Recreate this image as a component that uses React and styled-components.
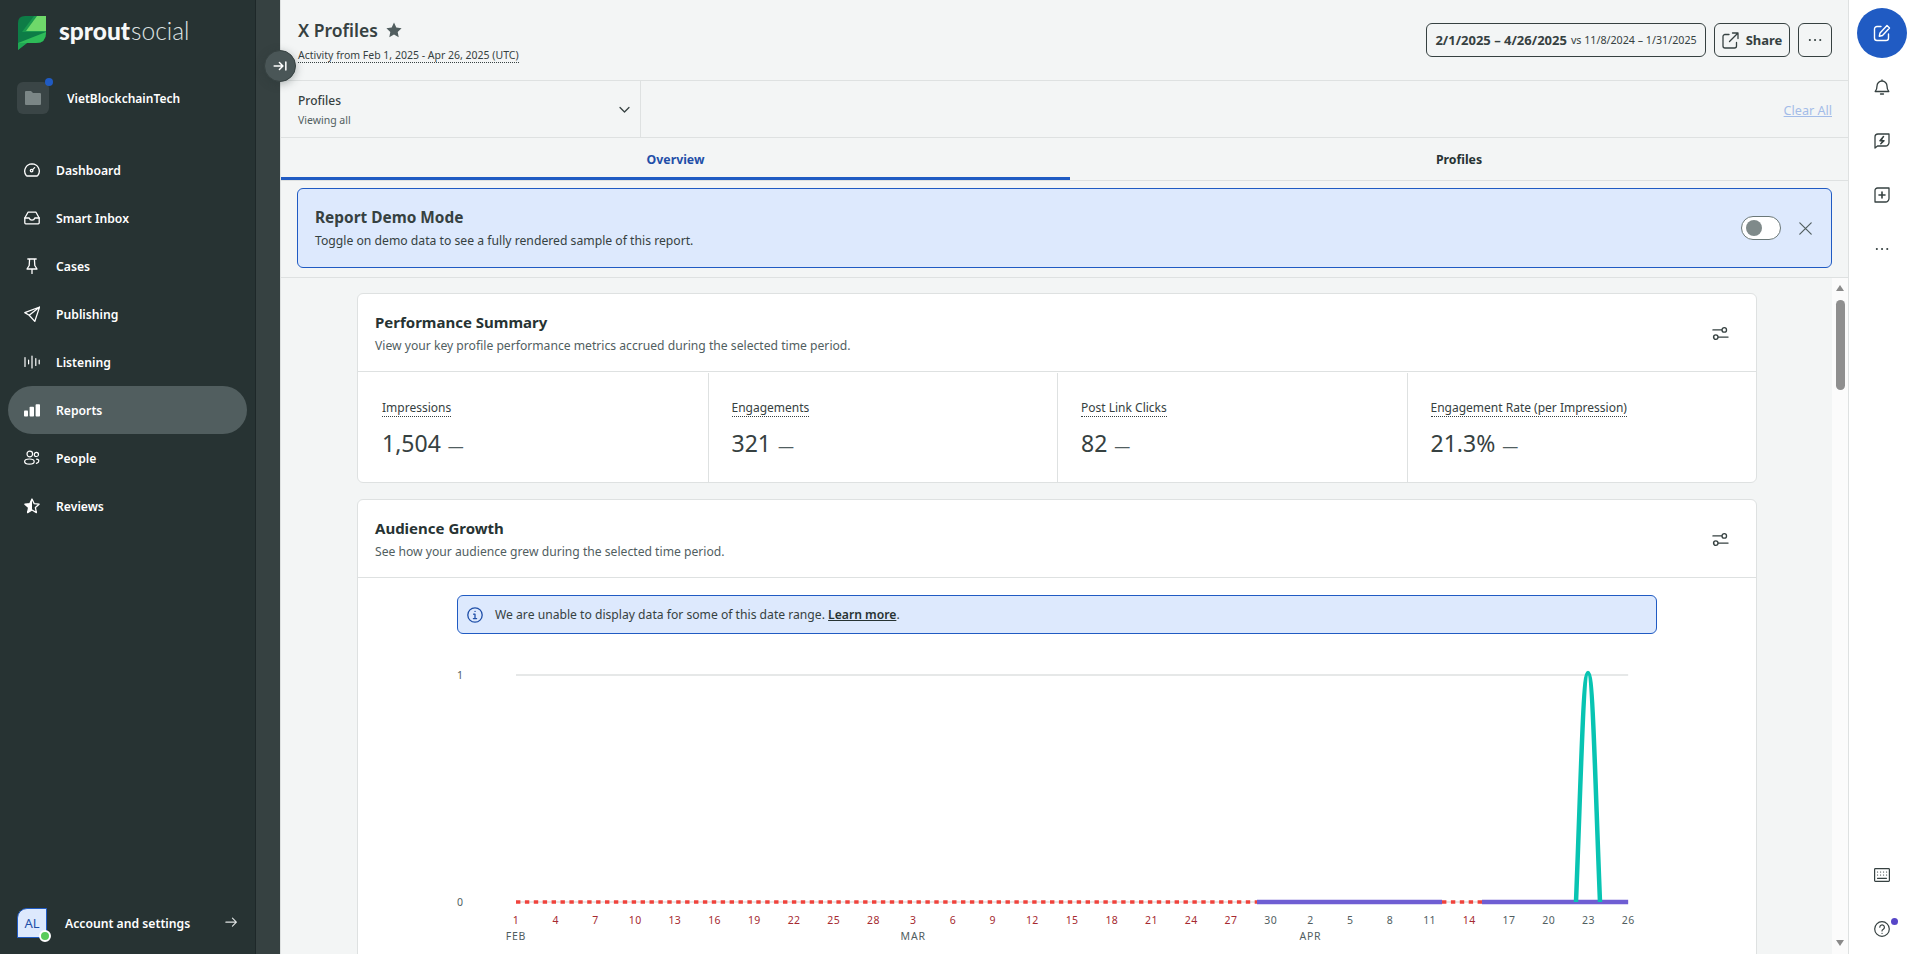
import styled, { createGlobalStyle } from "styled-components"

const GlobalStyle = createGlobalStyle`
    html, body, #root {
        margin: 0;
        height: 100%;
    }
    body {
        font-family: "Noto Sans", "Open Sans", sans-serif;
        color: #364141;
        overflow: hidden;
    }
    * {
        box-sizing: border-box;
    }
`;

const Page = styled.div`
    display: flex;
    height: 954px;
    overflow: hidden;
    position: relative;
`;

/* left navigation */
const Sidebar = styled.aside`
    width: 256px;
    flex-shrink: 0;
    display: flex;
    flex-direction: column;
    background-color: #273333;
    border-right: 1px solid #1e2829;
    color: #fff;
`;
const LogoRow = styled.div`
    display: flex;
    align-items: center;
    gap: 13px;
    height: 66px;
    padding: 0 0 0 18px;
`;
const LogoText = styled.div`
    font-family: "Lato", sans-serif;
    font-size: 24.5px;
    line-height: 1;
    margin-top: -3px;
    font-weight: 900;
    color: #f6f8f8;
    span {
        font-weight: 300;
        color: #dfe3e3;
        margin-left: 1px;
    }
`;
const OrgRow = styled.div`
    display: flex;
    align-items: center;
    gap: 18px;
    height: 32px;
    margin: 16px 0 32px 17px;
    font-size: 12px;
    font-weight: 600;
`;
const OrgIcon = styled.div`
    width: 32px;
    height: 32px;
    border-radius: 6px;
    background-color: #3a4546;
    display: flex;
    align-items: center;
    justify-content: center;
    position: relative;
`;
const OrgDot = styled.span`
    position: absolute;
    top: -4px;
    right: -4px;
    width: 8px;
    height: 8px;
    border-radius: 50%;
    background-color: #205bc3;
`;
const Nav = styled.nav`
    display: flex;
    flex-direction: column;
    padding: 0 8px;
`;
const NavItem = styled.div`
    height: 48px;
    display: flex;
    align-items: center;
    gap: 16px;
    padding-left: 16px;
    font-size: 12.2px;
    font-weight: 600;
    border-radius: 24px;
    background-color: ${({ $active }) => ($active ? "#515e5f" : "transparent")};
`;
const Account = styled.div`
    margin-top: auto;
    height: 46px;
    margin-bottom: 8px;
    display: flex;
    align-items: center;
    padding: 0 17px;
    font-size: 12.2px;
    font-weight: 600;
`;
const Avatar = styled.div`
    width: 30px;
    height: 30px;
    margin-right: 18px;
    border: 1px solid #205bc3;
    border-radius: 10px 0 0 0;
    background-color: #dde9fd;
    color: #1f4fa8;
    font-size: 13px;
    font-weight: 400;
    display: flex;
    align-items: center;
    justify-content: center;
    position: relative;
`;
const AvatarStatus = styled.span`
    position: absolute;
    right: -5px;
    bottom: -5px;
    width: 12px;
    height: 12px;
    border-radius: 50%;
    background-color: #59cb59;
    border: 2px solid #fff;
`;
const AccountArrow = styled.span`
    margin-left: auto;
    margin-right: -1px;
    display: flex;
`;
const Strip = styled.div`
    width: 24px;
    flex-shrink: 0;
    background-color: #364141;
`;
const CollapseButton = styled.div`
    position: absolute;
    left: 264px;
    top: 50px;
    width: 32px;
    height: 32px;
    border-radius: 50%;
    background-color: #4a5657;
    border: 1px solid #364141;
    box-shadow: 0 2px 8px rgba(39, 51, 51, 0.35);
    display: flex;
    align-items: center;
    justify-content: center;
    z-index: 3;
`;

/* main column */
const Main = styled.main`
    flex: 1;
    min-width: 0;
    display: flex;
    flex-direction: column;
    background-color: #f3f5f5;
    border-left: 1px solid #dee1e1;
`;
const Header = styled.header`
    height: 81px;
    flex-shrink: 0;
    display: flex;
    align-items: flex-start;
    justify-content: space-between;
    padding: 0 16px 0 17px;
    border-bottom: 1px solid #dee1e1;
`;
const TitleBlock = styled.div`
    padding-top: 17px;
`;
const TitleRow = styled.div`
    display: flex;
    align-items: center;
    gap: 8px;
    height: 25px;
`;
const Title = styled.h1`
    margin: 0;
    font-size: 17.5px;
    font-weight: 600;
    color: #364141;
`;
const Subtitle = styled.span`
    display: inline-block;
    margin-top: 5px;
    font-size: 10.5px;
    line-height: 14px;
    border-bottom: 1px dotted #364141;
`;
const HeaderActions = styled.div`
    display: flex;
    gap: 8px;
    padding-top: 23px;
`;
const OutlineButton = styled.div`
    height: 34px;
    width: ${({ $width }) => $width}px;
    display: flex;
    align-items: center;
    justify-content: center;
    gap: 7px;
    border: 1px solid #364141;
    border-radius: 6px;
    font-size: 13px;
    font-weight: 700;
    white-space: nowrap;
`;
const DateCompare = styled.span`
    font-size: 10.7px;
    font-weight: 400;
    margin-left: -3px;
`;
const FilterBar = styled.div`
    height: 57px;
    flex-shrink: 0;
    display: flex;
    border-bottom: 1px solid #dee1e1;
`;
const FilterSelect = styled.div`
    width: 360px;
    display: flex;
    align-items: center;
    justify-content: space-between;
    padding: 0 9px 0 17px;
    border-right: 1px solid #dee1e1;
`;
const FilterName = styled.div`
    font-size: 12px;
    line-height: 16px;
    font-weight: 500;
    padding-top: 2px;
`;
const FilterValue = styled.div`
    margin-top: 4px;
    font-size: 10.5px;
    line-height: 15px;
    color: #515e5f;
`;
const ClearAll = styled.a`
    margin: auto 16px auto auto;
    padding-top: 2px;
    font-size: 12.6px;
    color: #a3bce8;
    text-decoration: underline;
`;
const Tabs = styled.div`
    height: 43px;
    flex-shrink: 0;
    display: grid;
    grid-template-columns: 789px 1fr;
    border-bottom: 1px solid #dee1e1;
`;
const Tab = styled.div`
    display: flex;
    align-items: center;
    justify-content: center;
    padding-top: 3px;
    font-size: 12.3px;
    font-weight: 700;
    color: ${({ $active }) => ($active ? "#1f4fa8" : "#273333")};
    border-bottom: 3px solid ${({ $active }) => ($active ? "#205bc3" : "transparent")};
`;
const BannerWrap = styled.div`
    flex-shrink: 0;
    padding: 7px 16px 9px;
    border-bottom: 1px solid #dee1e1;
`;
const Banner = styled.div`
    height: 80px;
    display: flex;
    align-items: center;
    padding: 0 16px 0 17px;
    background-color: #dde9fd;
    border: 1px solid #205bc3;
    border-radius: 6px;
`;
const BannerTitle = styled.div`
    margin-top: 2.4px;
    font-size: 15.4px;
    line-height: 20px;
    font-weight: 700;
`;
const BannerText = styled.div`
    margin-top: 3.6px;
    font-size: 12.2px;
    line-height: 18px;
`;
const Toggle = styled.div`
    margin-left: auto;
    width: 40px;
    height: 24px;
    padding: 3px 4px;
    border: 1px solid #6b7878;
    border-radius: 12px;
    background-color: #fff;
`;
const ToggleKnob = styled.div`
    width: 16px;
    height: 16px;
    border-radius: 50%;
    background-color: #7f8a8a;
`;
const BannerClose = styled.div`
    display: flex;
    margin: 0 3px 0 18px;
`;

/* scrolling part */
const ScrollRow = styled.div`
    flex: 1;
    min-height: 0;
    display: flex;
`;
const ScrollContent = styled.div`
    flex: 1;
    min-width: 0;
    padding: 15px 75px 0 76px;
    overflow: hidden;
    display: flex;
    flex-direction: column;
    gap: 16px;
`;
const ScrollTrack = styled.div`
    width: 16px;
    flex-shrink: 0;
    background-color: #fbfbfb;
    display: flex;
    flex-direction: column;
    align-items: center;
    padding: 7px 0 8px;
`;
const ScrollArrow = styled.div`
    width: 0;
    height: 0;
    border-left: 4px solid transparent;
    border-right: 4px solid transparent;
    ${({ $down }) => ($down ? "border-top" : "border-bottom")}: 6px solid #8a8a8a;
`;
const ScrollThumb = styled.div`
    width: 9px;
    height: 90px;
    margin-top: 9px;
    margin-bottom: auto;
    border-radius: 5px;
    background-color: #8f8f8f;
`;
const Card = styled.section`
    flex-shrink: 0;
    background-color: #fff;
    border: 1px solid #dee1e1;
    border-radius: 6px;
`;
const CardHeader = styled.div`
    height: 78px;
    display: flex;
    align-items: center;
    justify-content: space-between;
    padding: 2px 27px 0 17px;
    border-bottom: 1px solid #dee1e1;
`;
const CardTitle = styled.h2`
    margin: 0;
    font-size: 15px;
    line-height: 20px;
    font-weight: 700;
    color: #273333;
`;
const CardSub = styled.p`
    margin: 5.5px 0 0;
    font-size: 12.15px;
    line-height: 18px;
    color: #515e5f;
`;
const Metrics = styled.div`
    display: grid;
    grid-template-columns: repeat(4, 1fr);
    height: 110px;
`;
const Metric = styled.div`
    padding: 22px 0 0 ${({ $first }) => ($first ? 24 : 23)}px;
    border-left: ${({ $first }) => ($first ? "none" : "1px solid #dee1e1")};
    margin-top: 1px;
`;
const MetricLabel = styled.span`
    font-size: 12px;
    line-height: 17px;
    display: inline-block;
    border-bottom: 1px dotted #364141;
`;
const MetricValue = styled.div`
    margin-top: 11px;
    font-size: 23px;
    line-height: 30px;
    display: flex;
    align-items: baseline;
    gap: 7px;
`;
const MetricDash = styled.span`
    font-size: 16px;
    color: #515e5f;
`;
const Notice = styled.div`
    width: 1200px;
    height: 39px;
    margin: 17px 0 0 99px;
    display: flex;
    align-items: center;
    gap: 12px;
    padding-left: 9px;
    background-color: #dde9fd;
    border: 1px solid #205bc3;
    border-radius: 6px;
    font-size: 12.15px;
`;
const NoticeLink = styled.a`
    font-weight: 600;
    text-decoration: underline;
    color: #273333;
`;
const ChartSvg = styled.svg`
    display: block;
    margin-top: 14px;
`;

/* right rail */
const Rail = styled.aside`
    width: 64px;
    flex-shrink: 0;
    display: flex;
    flex-direction: column;
    align-items: center;
    background-color: #fff;
    border-left: 1px solid #dee1e1;
    padding: 8px 0 0 2px;
    color: #364141;
`;
const ComposeButton = styled.div`
    width: 50px;
    height: 50px;
    border-radius: 50%;
    background-color: #205bc3;
    display: flex;
    align-items: center;
    justify-content: center;
    margin-bottom: 2px;
`;
const RailIcon = styled.div`
    width: 32px;
    height: 54px;
    display: flex;
    align-items: center;
    justify-content: center;
    position: relative;
`;
const RailBottom = styled.div`
    margin-top: auto;
    margin-bottom: -2px;
    display: flex;
    flex-direction: column;
`;
const HelpDot = styled.span`
    position: absolute;
    top: 16px;
    right: 0;
    width: 7px;
    height: 7px;
    border-radius: 50%;
    background-color: #5746c8;
`;

const Svg = ({ size = 16, w, h, box = "0 0 16 16", color = "currentColor", sw = 1.3, children }) => (
    <svg width={w || size} height={h || size} viewBox={box} fill="none" stroke={color} strokeWidth={sw} strokeLinecap="round" strokeLinejoin="round">
        {children}
    </svg>
);

const Logo = () => (
    <svg width="28" height="34" viewBox="0 0 28 34">
        <path d="M7 0H28V17Q28 27 18 27H9L0 34V7Q0 0 7 0Z" fill="#0d7c46" />
        <path d="M16 0H28V16H4Z" fill="#19994e" />
        <path d="M28 16V17Q28 27 18 27H9L0 27Z" fill="#2ebb58" />
        <path d="M0 27H9L0 34Z" fill="#1fa653" />
        <path d="M19 0H28V15H8Z" fill="#6fd86a" />
    </svg>
);

const icons = {
    dashboard: (
        <Svg>
            <path d="M8 1.8a7.3 7.3 0 0 1 5.7 11.8 1 1 0 0 1-.8.4H3.1a1 1 0 0 1-.8-.4A7.3 7.3 0 0 1 8 1.8Z" />
            <circle cx="7.6" cy="8.6" r="1.3" />
            <path d="M8.6 7.6L10.6 5.6" />
        </Svg>
    ),
    inbox: (
        <Svg>
            <path d="M.8 8L4 2.2h8L15.2 8v4.8a1 1 0 0 1-1 1H1.8a1 1 0 0 1-1-1Z" />
            <path d="M.8 8h4.4a2.9 2.9 0 0 0 5.6 0h4.4" />
        </Svg>
    ),
    pin: (
        <Svg>
            <path d="M3.8 1h8.4M5.6 1l-.4 6.5L3 11h10l-2.2-3.5L10.4 1M8 11v4.6" />
        </Svg>
    ),
    send: (
        <Svg>
            <path d="M15.6 1L.8 6.6l4.4 2.6 5.6 6.2ZM15.6 1L5.2 9.2" />
        </Svg>
    ),
    listening: (
        <Svg sw="1.2">
            <path d="M1 3.5v9M4.6 6.2v3.6M8 2v12M11.8 4.5v7M15.2 6.2v3.6" />
        </Svg>
    ),
    reports: (
        <svg width="16" height="16" viewBox="0 0 16 16" fill="currentColor">
            <rect x="0" y="8.6" width="4" height="6" rx=".8" />
            <rect x="5.6" y="4.8" width="4.4" height="9.8" rx=".8" />
            <rect x="11.6" y="2.2" width="4.4" height="12.4" rx=".8" />
        </svg>
    ),
    people: (
        <Svg sw="1.2">
            <circle cx="5.8" cy="4" r="2.8" />
            <circle cx="12.4" cy="4.4" r="2.1" />
            <ellipse cx="5.4" cy="11.6" rx="4.8" ry="2.6" />
            <path d="M12.6 9.2c3 .3 3 3-.2 4.2" />
        </Svg>
    ),
    reviews: (
        <svg width="16" height="16" viewBox="0 0 16 16">
            <path d="M8 1l2.1 4.6 5 .6-3.7 3.4 1 5L8 12l-4.4 2.6 1-5L.9 6.2l5-.6Z" fill="none" stroke="currentColor" strokeWidth="1.3" strokeLinejoin="round" />
            <path d="M8 1v11l-4.4 2.6 1-5L.9 6.2l5-.6Z" fill="currentColor" />
        </svg>
    ),
};

const navItems = [
    { label: "Dashboard", icon: "dashboard" },
    { label: "Smart Inbox", icon: "inbox" },
    { label: "Cases", icon: "pin" },
    { label: "Publishing", icon: "send" },
    { label: "Listening", icon: "listening" },
    { label: "Reports", icon: "reports", active: true },
    { label: "People", icon: "people" },
    { label: "Reviews", icon: "reviews" },
];

const metrics = [
    { label: "Impressions", value: "1,504" },
    { label: "Engagements", value: "321" },
    { label: "Post Link Clicks", value: "82" },
    { label: "Engagement Rate (per Impression)", value: "21.3%" },
];

const SlidersIcon = () => (
    <Svg size={17} box="0 0 18 18" color="#364141" sw="1.4">
        <path d="M1 5.2h9.500M2 12.800h.1M6.500 12.800h10.500" />
        <circle cx="13" cy="5.200" r="2.400" />
        <circle cx="4" cy="12.800" r="2.400" />
    </Svg>
);

// chart x/y are in card pixels, one day = 13.24px
const X0 = 158;
const DAY = 13.24;
const Y_TOP = 27;
const Y_ZERO = 254;
const dayX = (d) => X0 + d * DAY;
const tickLabels = [1, 4, 7, 10, 13, 16, 19, 22, 25, 28, 3, 6, 9, 12, 15, 18, 21, 24, 27, 30, 2, 5, 8, 11, 14, 17, 20, 23, 26];
const greyTicks = [19, 20, 21, 22, 23, 25, 26, 27, 28];

const Chart = () => (
    <ChartSvg width="1396" height="340" fontFamily="'Noto Sans', sans-serif">
        <text x="99" y={Y_TOP + 4} fontSize="10.5" fill="#515e5f">1</text>
        <text x="99" y={Y_ZERO + 4} fontSize="10.5" fill="#515e5f">0</text>
        <line x1={X0} x2={dayX(84)} y1={Y_TOP} y2={Y_TOP} stroke="#dee1e1" strokeWidth="1.5" />
        <line x1={X0} x2={dayX(84)} y1={Y_ZERO} y2={Y_ZERO} stroke="#dee1e1" strokeWidth="1.5" />
        <path d={`M${X0} ${Y_ZERO}H899`} stroke="#f0433c" strokeWidth="3.5" strokeDasharray="4.4 4.5" />
        <path d={`M1084 ${Y_ZERO}H1124`} stroke="#f0433c" strokeWidth="3.5" strokeDasharray="4.4 4.5" />
        <path d={`M899 ${Y_ZERO}H1084M1124 ${Y_ZERO}H${dayX(84)}`} stroke="#6f5ed3" strokeWidth="4.5" />
        <path
            d={`M1218 ${Y_ZERO}C1223 130 1225 25 1230 25C1235 25 1237 130 1242 ${Y_ZERO}`}
            stroke="#08c4b2"
            strokeWidth="4.5"
            fill="none"
        />
        {tickLabels.map((label, i) => (
            <text
                key={i}
                x={dayX(i * 3)}
                y="276"
                fontSize="10.5"
                letterSpacing=".4"
                textAnchor="middle"
                fill={greyTicks.includes(i) ? "#515e5f" : "#a62a30"}
            >
                {label}
            </text>
        ))}
        <text x={dayX(0)} y="292" fontSize="10.5" letterSpacing=".8" textAnchor="middle" fill="#515e5f">FEB</text>
        <text x={dayX(30)} y="292" fontSize="10.5" letterSpacing=".8" textAnchor="middle" fill="#515e5f">MAR</text>
        <text x={dayX(60)} y="292" fontSize="10.5" letterSpacing=".8" textAnchor="middle" fill="#515e5f">APR</text>
    </ChartSvg>
);

const App = () => {
    return (
        <Page>
            <GlobalStyle />
            <Sidebar>
                <LogoRow>
                    <Logo />
                    <LogoText>sprout<span>social</span></LogoText>
                </LogoRow>
                <OrgRow>
                    <OrgIcon>
                        <svg width="16" height="14" viewBox="0 0 16 14" fill="#7b8686">
                            <path d="M1 0h5l2 2h7a1 1 0 0 1 1 1v10a1 1 0 0 1-1 1H1a1 1 0 0 1-1-1V1a1 1 0 0 1 1-1Z" />
                        </svg>
                        <OrgDot />
                    </OrgIcon>
                    VietBlockchainTech
                </OrgRow>
                <Nav>
                    {navItems.map((item) => (
                        <NavItem key={item.label} $active={item.active}>
                            {icons[item.icon]}
                            {item.label}
                        </NavItem>
                    ))}
                </Nav>
                <Account>
                    <Avatar>
                        AL
                        <AvatarStatus />
                    </Avatar>
                    Account and settings
                    <AccountArrow>
                        <Svg size={14} color="#dfe3e3">
                            <path d="M1 7h12M8.5 2.5L13 7l-4.5 4.5" />
                        </Svg>
                    </AccountArrow>
                </Account>
            </Sidebar>
            <Strip />
            <CollapseButton>
                <Svg size={14} box="0 0 12 12" color="#fff" sw="1.3">
                    <path d="M1 6h7M5.500 3L8.500 6 5.500 9M11 2.500v7" />
                </Svg>
            </CollapseButton>

            <Main>
                <Header>
                    <TitleBlock>
                        <TitleRow>
                            <Title>X Profiles</Title>
                            <svg width="16" height="16" viewBox="0 0 16 16" fill="#515e5f">
                                <path d="M8 .6l2.3 4.900 5.300.7-3.900 3.700 1 5.300L8 12.600l-4.700 2.600 1-5.300L.4 6.200l5.300-.7Z" />
                            </svg>
                        </TitleRow>
                        <Subtitle>Activity from Feb 1, 2025 - Apr 26, 2025 (UTC)</Subtitle>
                    </TitleBlock>
                    <HeaderActions>
                        <OutlineButton $width={280}>
                            2/1/2025 – 4/26/2025 <DateCompare>vs 11/8/2024 – 1/31/2025</DateCompare>
                        </OutlineButton>
                        <OutlineButton $width={76}>
                            <Svg size={17} box="0 0 17 17" sw="1.3">
                                <path d="M7 2.500H3a2 2 0 0 0-2 2V14a2 2 0 0 0 2 2h9.500a2 2 0 0 0 2-2v-3.500M10.500 1H16v5.500M16 1L7.500 9.500" />
                            </Svg>
                            Share
                        </OutlineButton>
                        <OutlineButton $width={34}>
                            <Svg size={14} box="0 0 14 14" sw="2">
                                <path d="M1.800 7h.1M7 7h.1M12.200 7h.1" />
                            </Svg>
                        </OutlineButton>
                    </HeaderActions>
                </Header>
                <FilterBar>
                    <FilterSelect>
                        <div>
                            <FilterName>Profiles</FilterName>
                            <FilterValue>Viewing all</FilterValue>
                        </div>
                        <Svg size={13} sw="1.6">
                            <path d="M2.500 5.500L8 11l5.500-5.500" />
                        </Svg>
                    </FilterSelect>
                    <ClearAll>Clear All</ClearAll>
                </FilterBar>
                <Tabs>
                    <Tab $active>Overview</Tab>
                    <Tab>Profiles</Tab>
                </Tabs>
                <BannerWrap>
                    <Banner>
                        <div>
                            <BannerTitle>Report Demo Mode</BannerTitle>
                            <BannerText>Toggle on demo data to see a fully rendered sample of this report.</BannerText>
                        </div>
                        <Toggle>
                            <ToggleKnob />
                        </Toggle>
                        <BannerClose>
                            <Svg size={13} box="0 0 13 13" color="#515e5f" sw="1.2">
                                <path d="M.8.8l11.4 11.4M12.200.8L.8 12.200" />
                            </Svg>
                        </BannerClose>
                    </Banner>
                </BannerWrap>
                <ScrollRow>
                    <ScrollContent>
                        <Card>
                            <CardHeader>
                                <div>
                                    <CardTitle>Performance Summary</CardTitle>
                                    <CardSub>View your key profile performance metrics accrued during the selected time period.</CardSub>
                                </div>
                                <SlidersIcon />
                            </CardHeader>
                            <Metrics>
                                {metrics.map((metric, i) => (
                                    <Metric key={metric.label} $first={i === 0}>
                                        <MetricLabel>{metric.label}</MetricLabel>
                                        <MetricValue>
                                            {metric.value}
                                            <MetricDash>—</MetricDash>
                                        </MetricValue>
                                    </Metric>
                                ))}
                            </Metrics>
                        </Card>
                        <Card>
                            <CardHeader>
                                <div>
                                    <CardTitle>Audience Growth</CardTitle>
                                    <CardSub>See how your audience grew during the selected time period.</CardSub>
                                </div>
                                <SlidersIcon />
                            </CardHeader>
                            <Notice>
                                <Svg size={16} color="#1f4fa8" sw="1.3">
                                    <circle cx="8" cy="8" r="7.200" />
                                    <path d="M6.600 7.200H8v4.400M6.400 11.600h3.200M8 4.400h.1" />
                                </Svg>
                                <span>
                                    We are unable to display data for some of this date range. <NoticeLink>Learn more</NoticeLink>.
                                </span>
                            </Notice>
                            <Chart />
                        </Card>
                    </ScrollContent>
                    <ScrollTrack>
                        <ScrollArrow />
                        <ScrollThumb />
                        <ScrollArrow $down />
                    </ScrollTrack>
                </ScrollRow>
            </Main>

            <Rail>
                <ComposeButton>
                    <Svg size={18} box="0 0 18 18" color="#fff" sw="1.4">
                        <path d="M8 2.500H4a2.500 2.500 0 0 0-2.500 2.500V14A2.500 2.500 0 0 0 4 16.500h9a2.500 2.500 0 0 0 2.500-2.500V10" />
                        <path d="M14 1.500l2.500 2.500-7 7.500-3.200.700.700-3.200Z" />
                    </Svg>
                </ComposeButton>
                <RailIcon>
                    <Svg size={16}>
                        <path d="M1.200 12.500c1.500-1.500 1.800-2.500 1.800-5.500a5 5 0 0 1 10 0c0 3 .3 4 1.800 5.500ZM6.500 15h3M8 2V.8" />
                    </Svg>
                </RailIcon>
                <RailIcon>
                    <Svg size={16}>
                        <path d="M4 1h11v8.500a3.500 3.500 0 0 1-3.500 3.500H3.500L1 15V4a3 3 0 0 1 3-3Z" />
                        <path d="M9.500 3.500L6 7.700h4L6.800 10.800" strokeWidth="1.500" fill="currentColor" />
                    </Svg>
                </RailIcon>
                <RailIcon>
                    <Svg size={16}>
                        <path d="M3.500 1H15v10.500a3.500 3.500 0 0 1-3.500 3.500H1V3.500A2.500 2.500 0 0 1 3.500 1Z" />
                        <path d="M8 5v6M5 8h6" strokeWidth="1.600" />
                    </Svg>
                </RailIcon>
                <RailIcon>
                    <Svg size={14} box="0 0 14 14" sw="2">
                        <path d="M1.800 7h.1M7 7h.1M12.200 7h.1" />
                    </Svg>
                </RailIcon>
                <RailBottom>
                    <RailIcon>
                        <Svg w={16} h={14} box="0 0 16 14" sw="1.200">
                            <rect x=".6" y=".6" width="14.800" height="12.800" rx=".8" />
                            <path d="M3.500 4h.1M6.500 4h.1M9.500 4h.1M12.500 4h.1M3.500 7h.1M6.500 7h.1M9.500 7h.1M12.500 7h.1M3.500 10.300h9" />
                        </Svg>
                    </RailIcon>
                    <RailIcon>
                        <Svg size={16} sw="1.200">
                            <circle cx="8" cy="8" r="7.300" />
                            <path d="M5.800 6.200a2.300 2.300 0 1 1 3.500 2c-.9.500-1.300 1-1.300 1.800M8 12.300h.1" />
                        </Svg>
                        <HelpDot />
                    </RailIcon>
                </RailBottom>
            </Rail>
        </Page>
    )
}

export default App
